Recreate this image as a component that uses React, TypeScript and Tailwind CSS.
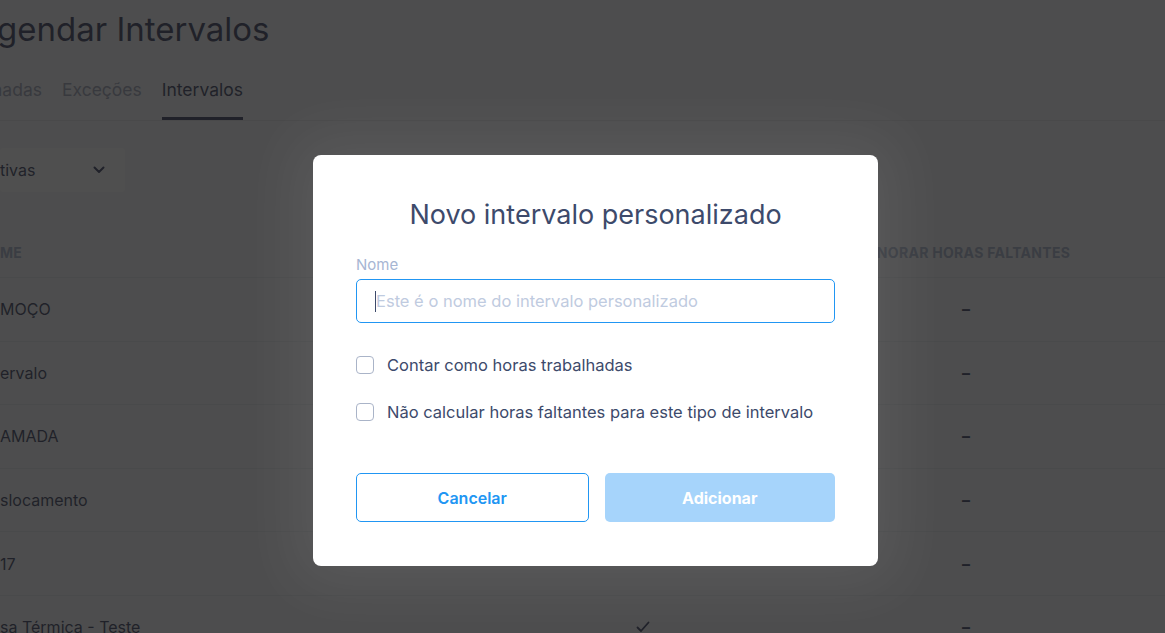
import React from "react";

const rows = [
  { name: "MOÇO", mid: "", last: "–" },
  { name: "ervalo", mid: "", last: "–" },
  { name: "AMADA", mid: "", last: "–" },
  { name: "slocamento", mid: "", last: "–" },
  { name: "17", mid: "", last: "–" },
  { name: "sa Térmica - Teste", mid: "check", last: "–" },
];

function Check() {
  return (
    <svg width="14" height="12" viewBox="0 0 14 12" fill="none">
      <path d="M1.5 6.5 L5 10 L12.5 1.5" stroke="#141c44" strokeWidth="1.8" strokeLinecap="round" strokeLinejoin="round" />
    </svg>
  );
}

export default function App() {
  return (
    <div className="relative h-[633px] w-[1165px] overflow-hidden bg-[#f4f5f7] font-['Inter',sans-serif]">
      {/* Page behind the dialog */}
      <div className="flex flex-col">
        <h1 className="-ml-[3px] mt-[6px] h-[46px] whitespace-nowrap text-[33px] leading-[46px] text-[#141c44]">gendar Intervalos</h1>
        <div className="mt-[18px] flex h-[51px] items-stretch border-b border-[#dfe1e6]">
          <div className="-ml-[8px] flex gap-[20px] text-[17.5px]">
            <div className="flex items-center pb-[10px] text-[#8d93ab]">nadas</div>
            <div className="flex items-center pb-[10px] text-[#8d93ab]">Exceções</div>
            <div className="flex items-center border-b-[3px] border-[#141c44] pb-[7px] text-[#141c44]">Intervalos</div>
          </div>
        </div>
        <div className="mt-[27px] flex h-[44px] w-[125px] items-center justify-between rounded-[4px] bg-white pr-[20px] text-[16px] text-[#141c44]">
          <span>tivas</span>
          <svg width="12" height="8" viewBox="0 0 12 8" fill="none">
            <path d="M1.5 1.5 L6 6 L10.5 1.5" stroke="#141c44" strokeWidth="2" strokeLinecap="round" strokeLinejoin="round" />
          </svg>
        </div>
        <div className="mt-[36px] flex h-[50px] items-center border-b border-[#e2e3e8] text-[14px] font-bold tracking-[0.3px] text-[#98a3c0]">
          <div className="w-[480px]">ME</div>
          <div className="w-[326px]"></div>
          <div className="w-[320px] whitespace-nowrap text-center">IGNORAR HORAS FALTANTES</div>
        </div>
        {rows.map((r, i) => (
          <div key={i} className="flex h-[63.6px] shrink-0 items-center border-b border-[#e2e3e8] text-[16px] text-[#141c44]">
            <div className="w-[480px] whitespace-nowrap">{r.name}</div>
            <div className="flex w-[326px] justify-center">{r.mid === "check" ? <Check /> : null}</div>
            <div className="w-[320px] text-center font-bold">{r.last}</div>
          </div>
        ))}
      </div>

      {/* Overlay */}
      <div className="absolute inset-0 bg-[#232323]/80"></div>

      {/* Dialog */}
      <div className="absolute left-[313px] top-[155px] flex h-[411px] w-[565px] flex-col rounded-[8px] bg-white px-[43px] shadow-[0_0_60px_20px_rgba(255,255,255,0.07)]">
        <h2 className="mt-[42px] whitespace-nowrap text-center text-[27px] leading-[36px] text-[#3d4a6b]">Novo intervalo personalizado</h2>
        <label className="mt-[22px] text-[15px] leading-[20px] text-[#a7b6d3]">Nome</label>
        <div className="relative mt-[4px]">
          <input
            className="h-[44px] w-full rounded-[5px] border border-[#2196f3] px-[19px] text-[16.5px] text-[#3d4a6b] outline-none placeholder:text-[#bfcbe0]"
            placeholder="Este é o nome do intervalo personalizado"
          />
          <span className="absolute left-[19px] top-[12px] h-[21px] w-[1px] bg-[#3d4a6b]"></span>
        </div>
        <label className="mt-[33px] flex items-center gap-[13px] whitespace-nowrap text-[16.5px] leading-[18px] text-[#3d4a6b]">
          <span className="h-[18px] w-[18px] shrink-0 rounded-[4px] border-[1.5px] border-[#aab4c8]"></span>
          Contar como horas trabalhadas
        </label>
        <label className="mt-[29px] flex items-center gap-[13px] whitespace-nowrap text-[16.5px] leading-[18px] text-[#3d4a6b]">
          <span className="h-[18px] w-[18px] shrink-0 rounded-[4px] border-[1.5px] border-[#aab4c8]"></span>
          Não calcular horas faltantes para este tipo de intervalo
        </label>
        <div className="mt-[52px] flex gap-[16px]">
          <button className="h-[49px] flex-1 rounded-[5px] border border-[#2196f3] bg-white text-[16px] font-semibold text-[#2196f3]">Cancelar</button>
          <button className="h-[49px] flex-1 rounded-[5px] bg-[#a6d4fb] text-[16px] font-bold text-white">Adicionar</button>
        </div>
      </div>
    </div>
  );
}
